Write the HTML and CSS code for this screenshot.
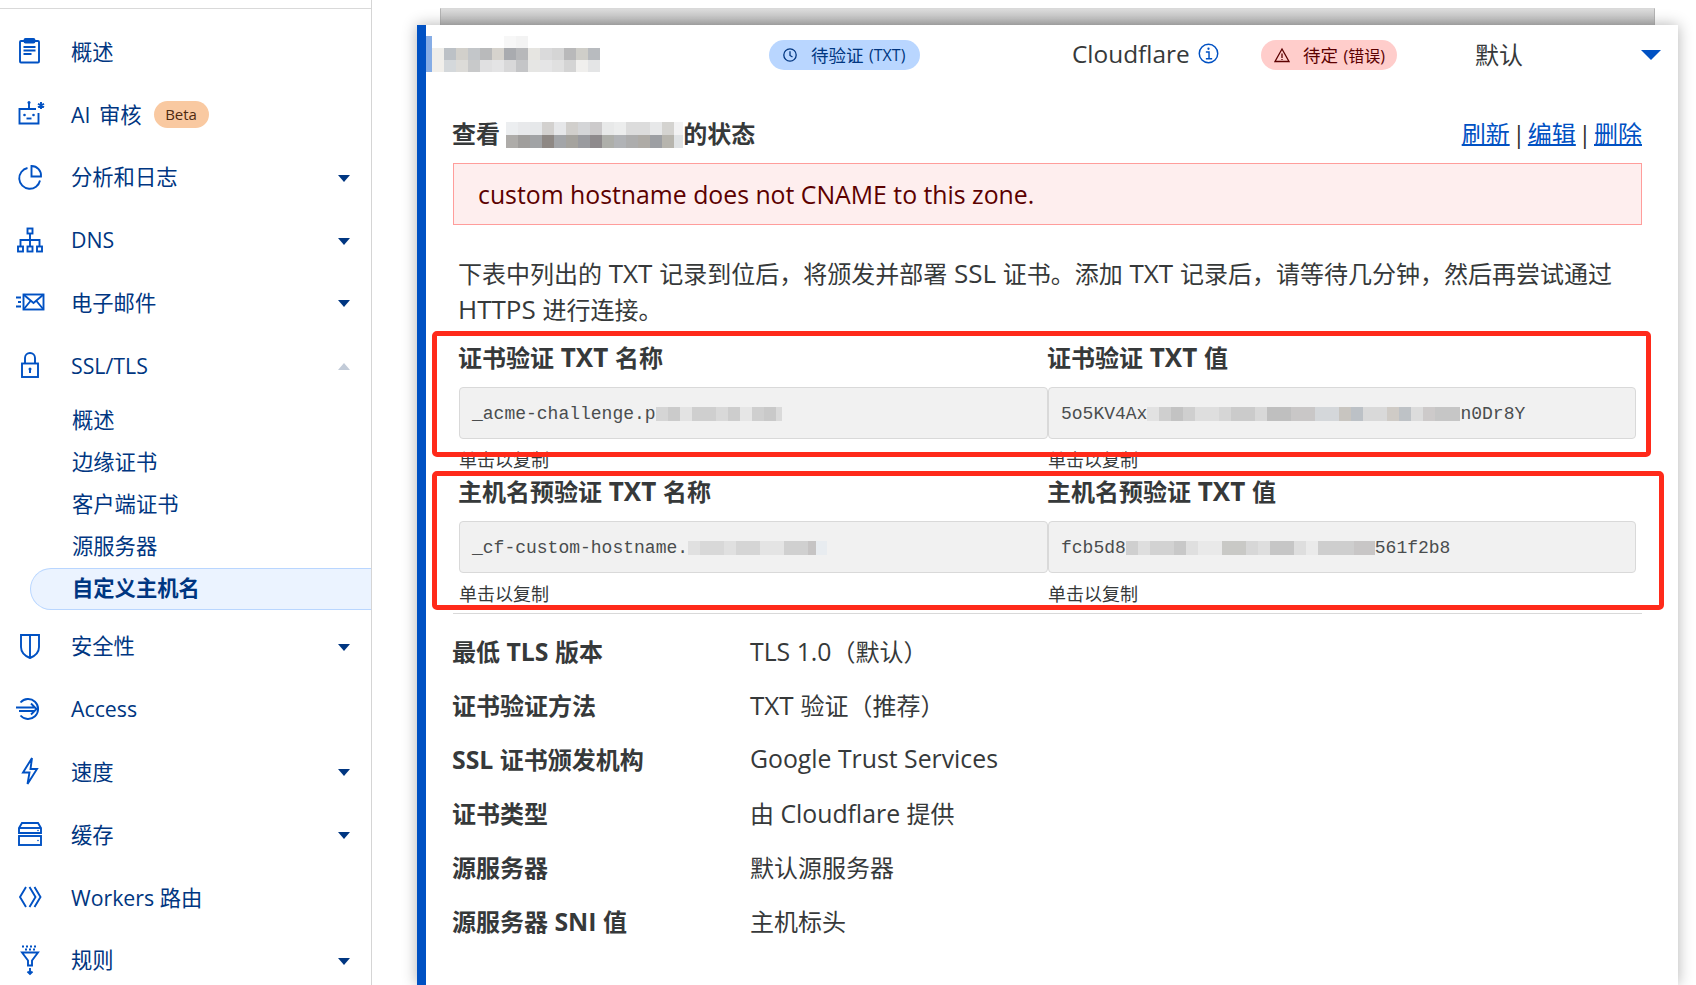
FILE: index.html
```html
<!DOCTYPE html>
<html lang="zh-CN">
<head>
<meta charset="utf-8">
<title>自定义主机名</title>
<link rel="stylesheet" href="styles.css">
</head>
<body>
<div class="page">
  <nav class="sidebar">
    <a class="item"><svg class="icon" viewBox="0 0 32 32"><rect x="6" y="6" width="19" height="21.500" rx="1"/><rect x="10.500" y="4" width="10" height="3.500" rx="1"/><path d="M9.500 12h12M9.500 15.500h12M9.500 19h8"/></svg><span class="label zh">概述</span></a>
    <a class="item"><svg class="icon" viewBox="0 0 32 32"><path d="M22 11H5.500v14.500H24.500V15"/><path d="M15 11V4.500"/><circle class="dot" cx="15" cy="4.500" r="1.500"/><circle class="dot" cx="10.500" cy="17" r="1.300"/><circle class="dot" cx="19.500" cy="17" r="1.300"/><path d="M12.500 20.500h5"/><path d="M27 4v7M24 5.800l6 3.500M30 5.800l-6 3.500"/></svg><span class="label zh spaced">AI 审核</span><span class="beta">Beta</span></a>
    <a class="item"><svg class="icon" viewBox="0 0 32 32"><path d="M13.500 7a10.500 10.500 0 1 0 12.500 12.500"/><path d="M17.500 5a9.500 9.500 0 0 1 9.500 10.500h-9.500z"/></svg><span class="label zh">分析和日志</span><i class="caret"></i></a>
    <a class="item"><svg class="icon" viewBox="0 0 32 32"><rect x="13.500" y="4.500" width="5" height="5"/><rect x="4" y="22.500" width="5" height="5"/><rect x="13.500" y="22.500" width="5" height="5"/><rect x="23" y="22.500" width="5" height="5"/><path d="M16 9.500v13M6.500 22.500V16h19v6.500"/></svg><span class="label">DNS</span><i class="caret"></i></a>
    <a class="item"><svg class="icon" viewBox="0 0 32 32"><rect x="9.500" y="8.500" width="20" height="15"/><path d="M9.500 8.500l10 8.500 10-8.500M9.500 23.500l7-8.500M29.500 23.500l-7-8.500M2 11.500h5M4 16h3M2 20.500h5"/></svg><span class="label zh">电子邮件</span><i class="caret"></i></a>
    <a class="item"><svg class="icon" viewBox="0 0 32 32"><rect x="8" y="14.500" width="16" height="13.500"/><path d="M11 14.500V9a5 5 0 0 1 10 0v5.500"/><circle class="dot" cx="16" cy="20" r="1.500"/><path d="M16 20v4"/></svg><span class="label">SSL/TLS</span><i class="caret up"></i></a>
    <div class="sub">
      <a class="sub-item">概述</a>
      <a class="sub-item">边缘证书</a>
      <a class="sub-item">客户端证书</a>
      <a class="sub-item">源服务器</a>
      <a class="sub-item active">自定义主机名</a>
    </div>
    <a class="item"><svg class="icon" viewBox="0 0 32 32"><path d="M7 5h18v12c0 5-4 9-9 11-5-2-9-6-9-11z"/><path d="M16 5v22"/></svg><span class="label zh">安全性</span><i class="caret"></i></a>
    <a class="item"><svg class="icon" viewBox="0 0 32 32"><path d="M6.500 9.500a10 10 0 1 1 0 13"/><path d="M2 14.500h19M5 18h16M17 10.500l5.500 5.500-5.500 5.500"/></svg><span class="label">Access</span></a>
    <a class="item"><svg class="icon" viewBox="0 0 32 32"><path d="M18 3L9 17.500h6.500L13.500 29 23 14h-6.500z"/></svg><span class="label zh">速度</span><i class="caret"></i></a>
    <a class="item"><svg class="icon" viewBox="0 0 32 32"><path d="M5 15V10l3-5h16l3 5v5z"/><rect x="5" y="18" width="22" height="9"/><path d="M5 10h22"/><circle class="dot" cx="24" cy="12.500" r=".8"/><circle class="dot" cx="24" cy="22.500" r=".8"/></svg><span class="label zh">缓存</span><i class="caret"></i></a>
    <a class="item"><svg class="icon" viewBox="0 0 32 32"><path d="M12 6L6 16l6 10M15.500 6l6 10-6 10M20.500 6l6 10-6 10"/></svg><span class="label">Workers 路由</span></a>
    <a class="item"><svg class="icon" viewBox="0 0 32 32"><path d="M8 8.500h16l-6 8v5h-4v-5z"/><path d="M16 24v6M13.500 27.500L16 30l2.500-2.500"/><path class="dots" d="M8 2.500h16M11 5.500h10"/></svg><span class="label zh">规则</span><i class="caret"></i></a>
  </nav>

  <main class="main">
    <div class="behind"></div>
    <section class="card">
      <header class="card-head">
        <div><span class="mosaic m-head"></span></div>
        <div><span class="pill pill-blue"><svg class="pill-icon" viewBox="0 0 16 16"><circle cx="8" cy="8" r="6.200"/><path d="M8 4.200V8.500l2.500 1.500"/></svg>待验证 <small>(TXT)</small></span></div>
        <div class="provider">Cloudflare<svg class="info" viewBox="0 0 20 20"><circle cx="10" cy="10" r="8.800"/><path d="M7.500 8.500H10.500V15M7.500 15h6"/><circle class="dot" cx="10" cy="5.500" r="1.100"/></svg></div>
        <div><span class="pill pill-red"><svg class="pill-icon" viewBox="0 0 16 16"><path d="M8 2L15 14.500H1z"/><path d="M8 6.500v4.500M8 12v1"/></svg>待定 <small>(错误)</small></span></div>
        <div class="origin">默认</div>
        <i class="toggle"></i>
      </header>

      <div class="body">
        <div class="title-row">
          <h2 class="title">查看 <span class="mosaic m-title"></span>的状态</h2>
          <div class="links"><a>刷新</a> | <a>编辑</a> | <a>删除</a></div>
        </div>
        <div class="error">custom hostname does not CNAME to this zone.</div>
        <p class="intro">下表中列出的<span class="caps"> TXT </span>记录到位后，将颁发并部署<span class="caps"> SSL </span>证书。添加<span class="caps"> TXT </span>记录后，请等待几分钟，然后再尝试通过 <span class="caps">HTTPS </span>进行连接。</p>

        <div class="txt-grid">
          <div class="txt-block">
            <h3>证书验证<span class="caps"> TXT </span>名称</h3>
            <div class="field">_acme-challenge.p<span class="mosaic m-f1"></span></div>
            <div class="hint">单击以复制</div>
          </div>
          <div class="txt-block">
            <h3>证书验证<span class="caps"> TXT </span>值</h3>
            <div class="field">5o5KV4Ax<span class="mosaic m-f2"></span>n0Dr8Y</div>
            <div class="hint">单击以复制</div>
          </div>
          <div class="txt-block">
            <h3>主机名预验证<span class="caps"> TXT </span>名称</h3>
            <div class="field">_cf-custom-hostname.<span class="mosaic m-f3"></span></div>
            <div class="hint">单击以复制</div>
          </div>
          <div class="txt-block">
            <h3>主机名预验证<span class="caps"> TXT </span>值</h3>
            <div class="field">fcb5d8<span class="mosaic m-f4"></span>561f2b8</div>
            <div class="hint">单击以复制</div>
          </div>
        </div>

        <dl class="details">
          <div class="detail"><dt>最低<span class="en"> TLS </span>版本</dt><dd><span class="en">TLS 1.0</span>（默认）</dd></div>
          <div class="detail"><dt>证书验证方法</dt><dd><span class="caps">TXT </span>验证（推荐）</dd></div>
          <div class="detail"><dt><span class="en">SSL </span>证书颁发机构</dt><dd><span class="en">Google Trust Services</span></dd></div>
          <div class="detail"><dt>证书类型</dt><dd>由<span class="en"> Cloudflare </span>提供</dd></div>
          <div class="detail"><dt>源服务器</dt><dd>默认源服务器</dd></div>
          <div class="detail"><dt>源服务器<span class="en"> SNI </span>值</dt><dd>主机标头</dd></div>
        </dl>
      </div>
    </section>
  </main>
</div>
<div class="mark mark-1"></div>
<div class="mark mark-2"></div>
</body>
</html>
```

FILE: styles.css
```css
* { box-sizing: border-box; }
html, body { margin: 0; padding: 0; height: 100%; overflow: hidden; background: #fff; }
body {
  font-family: "Open Sans", "Noto Sans CJK SC", sans-serif;
  color: #36393a;
}
.page { display: flex; height: 985px; }
.en { font-size: 24.800px; line-height: 0; }
.caps { font-size: 26px; line-height: 0; }

/* Sidebar */
.sidebar {
  width: 372px;
  flex: none;
  border-right: 1px solid #d5d5d5;
  position: relative;
  padding-top: 20px;
  color: #003681;
  font-size: 21.300px;
  background: linear-gradient(#fff 0 8px, #d9d9d9 8px 9px, #fff 9px) no-repeat;
}
.item {
  display: flex;
  align-items: center;
  height: 62.750px;
  padding-left: 14px;
  padding-right: 21px;
}
.icon {
  width: 32px;
  height: 32px;
  flex: none;
  margin-right: 25px;
  fill: none;
  stroke: #0051c3;
  stroke-width: 1.900;
}
.icon .dot { fill: #0051c3; stroke: none; }
.icon .dots { stroke-dasharray: 2 2; }
.label { white-space: nowrap; }
.label.zh { padding-bottom: 2px; }
.label.spaced { word-spacing: 3px; }
.beta {
  margin-left: 12px;
  width: 55px;
  height: 27px;
  line-height: 27px;
  border-radius: 14px;
  background: #f9c9a1;
  color: #4f2a10;
  font-size: 15px;
  text-align: center;
}
.caret {
  margin-left: auto;
  margin-top: 3px;
  width: 0;
  height: 0;
  border-left: 6.500px solid transparent;
  border-right: 6.500px solid transparent;
  border-top: 7px solid #003681;
}
.caret.up { border-top: 0; border-bottom: 7px solid #c2cbd8; }
.sub { padding-top: 2px; height: 218px; }
.sub-item {
  display: block;
  height: 42px;
  line-height: 42px;
  padding-left: 72px;
}
.sub-item.active {
  margin-left: 30px;
  margin-top: 1px;
  padding-left: 41px;
  background: #ebf3ff;
  border: 1px solid #b9d6ff;
  border-right: 0;
  border-radius: 21px 0 0 21px;
  font-weight: 700;
  line-height: 38px;
}

/* Main */
.main { flex: 1; min-width: 0; padding: 8px 18px 0 45px; }
.behind {
  height: 17px;
  margin: 0 23px;
  border-top: 1px solid #d9d9d9;
  border-left: 1px solid #b4b4b4;
  border-right: 1px solid #b4b4b4;
  background: linear-gradient(#dcdcdc, #b9b9b9);
}
.card {
  height: 960px;
  background: #fff;
  border-left: 9px solid #0051c3;
  box-shadow: 0 0 14px rgba(0, 0, 0, .3);
  position: relative;
}
.card-head {
  display: grid;
  grid-template-columns: 343px 303px 189px 214px 166px 20px;
  align-items: center;
  height: 56px;
  font-size: 24px;
}
.pill {
  display: inline-flex;
  align-items: center;
  height: 30px;
  padding-left: 13px;
  border-radius: 15px;
  font-size: 17.500px;
  white-space: pre;
}
.pill small { font-size: 16px; margin-left: 1px; }
.pill-blue { width: 151px; background: #b9d6ff; color: #003681; }
.pill-red { width: 136px; background: #ffcdcb; color: #5c0000; }
.pill-icon {
  width: 16px;
  height: 16px;
  margin-right: 13px;
  fill: none;
  stroke: currentColor;
  stroke-width: 1.300;
}
.provider { display: flex; align-items: center; white-space: nowrap; font-size: 24.400px; padding-top: 1px; }
.info {
  width: 21px;
  height: 21px;
  margin-left: 8px;
  fill: none;
  stroke: #0051c3;
  stroke-width: 1.400;
}
.info .dot { fill: #0051c3; stroke: none; }
.toggle {
  margin-top: 4px;
  width: 0;
  height: 0;
  border-left: 10px solid transparent;
  border-right: 10px solid transparent;
  border-top: 10px solid #0051c3;
}

/* Mosaics standing in for the blurred parts of the shot */
.mosaic { display: inline-block; vertical-align: middle; background-repeat: no-repeat; }
.m-head {
  display: block;
  margin-top: 2px;
  width: 174px;
  height: 36px;
  border-left: 6px solid #86ade6;
  background-origin: padding-box;
  background-image:
    linear-gradient(90deg, #fff 0 72px, #f7f7f7 72px 84px, #f3f3f3 84px 96px, #fff 96px),
    linear-gradient(90deg, #efeeea 0 12px, #bcc1c6 12px 24px, #d2d0cb 24px 36px, #c3c6c9 36px 48px, #b9babb 48px 60px, #d6d3cd 60px 72px, #a9abaf 72px 84px, #b7b8ba 84px 96px, #e6e5e1 96px 108px, #dadadb 108px 120px, #d5d5d5 120px 132px, #b9b9ba 132px 144px, #cfcec9 144px 156px, #b8bbbf 156px 168px),
    linear-gradient(90deg, #f1efeb 0 12px, #d4d8db 12px 24px, #dcdbd8 24px 36px, #c8c9ca 36px 48px, #e0e0e1 48px 60px, #e4e4e5 60px 72px, #d8d8d9 72px 84px, #c4c5c7 84px 96px, #e6e6e4 96px 108px, #e5e5e6 108px 120px, #e0e0e0 120px 132px, #d4d4d4 132px 144px, #f0efed 144px 156px, #e4e5e6 156px 168px);
  background-size: 100% 12px;
  background-position: 0 0, 0 12px, 0 24px;
}
.m-title {
  width: 177px;
  height: 26px;
  margin-top: -4px;
  background-image:
    linear-gradient(90deg, #eceef0 0 12px, #e8e9eb 12px 24px, #e6e8ea 24px 36px, #d3d1cf 36px 48px, #e6e7e9 48px 60px, #d1cfcc 60px 72px, #d4d5d7 72px 84px, #cccacb 84px 96px, #e8e9e9 96px 108px, #eceded 108px 120px, #dcdcdc 120px 144px, #e7e8e9 144px 156px, #d4d3d0 156px 168px, #f2f2f3 168px 177px),
    linear-gradient(90deg, #aeaca9 0 12px, #a09e9c 12px 24px, #a1a3a5 24px 36px, #8e8884 36px 48px, #a3a5a8 48px 60px, #a5a39e 60px 72px, #9a9b9f 72px 84px, #8e8a8c 84px 96px, #aeafaa 96px 108px, #b1b3b6 108px 120px, #adadad 120px 132px, #aeaba6 132px 144px, #9d9fa3 144px 156px, #b7b5ae 156px 168px, #dfe2e4 168px 177px);
  background-size: 100% 50%;
  background-position: top, bottom;
}
.m-f1 {
  width: 126px;
  height: 14px;
  background-image: linear-gradient(90deg, #d5d5d5 0 12px, #cbcbcb 12px 24px, #e3e3e3 24px 36px, #cfcfcf 36px 60px, #d9d9d9 60px 72px, #cdcdcd 72px 84px, #e6e6e6 84px 96px, #cfcfcf 96px 108px, #c9c9c9 108px 120px, #dadada 120px 126px);
}
.m-f2 {
  width: 313px;
  height: 14px;
  background-image: linear-gradient(90deg, #e2e2e2 0 12px, #cfcfcf 12px 24px, #c3c3c3 24px 36px, #cfcfcf 36px 48px, #dedede 48px 72px, #d6d6d6 72px 84px, #cbcbcb 84px 108px, #d8d8d8 108px 120px, #bfbfbf 120px 144px, #c9c7c7 144px 168px, #d4d7da 168px 192px, #c8c5c0 192px 204px, #bcc1c6 204px 216px, #d9d9d9 216px 240px, #cfcbc6 240px 252px, #bec2c6 252px 264px, #dcdcdc 264px 276px, #cdcaca 276px 288px, #c6c6c6 288px 313px);
}
.m-f3 {
  width: 139px;
  height: 14px;
  background-image: linear-gradient(90deg, #e0e0e0 0 12px, #d8d8d8 12px 36px, #e0e0e0 36px 48px, #d5d5d5 48px 72px, #e4e4e4 72px 96px, #d0d0d0 96px 120px, #c6c4c4 120px 128px, #e8ecf0 128px 139px);
}
.m-f4 {
  width: 249px;
  height: 14px;
  background-image: linear-gradient(90deg, #cfcfcf 0 12px, #dedede 12px 24px, #d2d2d2 24px 48px, #c8c8c8 48px 60px, #dfdfdf 60px 72px, #e9e9e9 72px 96px, #c9c9c6 96px 120px, #d7d7d7 120px 132px, #dedede 132px 144px, #c6c6c6 144px 168px, #dedede 168px 180px, #eaeaea 180px 192px, #cecece 192px 228px, #c8c6c6 228px 249px);
}

/* Body of the card */
.body { padding: 35px 36px 0 27px; }
.title-row { display: flex; justify-content: space-between; height: 36px; line-height: 36px; font-size: 24px; }
.title { margin: 0 0 0 -1px; font-size: 24px; font-weight: 700; white-space: nowrap; }
.links { color: #313131; word-spacing: -3.750px; }
.links a { color: #0051c3; text-decoration: underline; text-decoration-thickness: 2px; }
.error {
  margin-top: 11px;
  height: 62px;
  line-height: 60px;
  padding-left: 24px;
  background: #feeeee;
  border: 1px solid #ff9d9b;
  color: #5c0000;
  font-size: 24.800px;
}
.intro { margin: 31px 0 0 5px; font-size: 24px; line-height: 36px; width: 1160px; }
.txt-grid {
  display: grid;
  grid-template-columns: 589px 588px;
  margin: 12px 0 0 6px;
  padding-bottom: 5px;
}
.txt-block { height: 134px; }
.txt-block h3 { margin: 0 0 0 -1px; height: 36px; line-height: 36px; font-size: 24px; font-weight: 700; }
.field {
  margin-top: 11px;
  height: 52px;
  line-height: 52px;
  padding-left: 12px;
  background: #f1f1f1;
  border: 1px solid #d9d9d9;
  border-radius: 4px;
  font-family: "Liberation Mono", monospace;
  font-size: 18px;
  color: #4a4d4e;
  white-space: nowrap;
  overflow: hidden;
}
.hint { margin-top: 8px; height: 27px; line-height: 27px; font-size: 18px; }
.details { margin: 0; padding-top: 9px; border-top: 1px solid #d9d9d9; }
.detail { display: flex; height: 54px; align-items: center; font-size: 24px; }
.detail dt { width: 298px; margin-left: -1px; font-weight: 700; flex: none; }
.detail dd { margin: 0; }

/* Red annotation frames drawn on top of the screenshot */
.mark {
  position: absolute;
  border: 5px solid #ff2a1a;
  border-radius: 5px;
  pointer-events: none;
}
.mark-1 { left: 432px; top: 331px; width: 1219px; height: 126px; }
.mark-2 { left: 432px; top: 471px; width: 1232px; height: 139px; }
```
